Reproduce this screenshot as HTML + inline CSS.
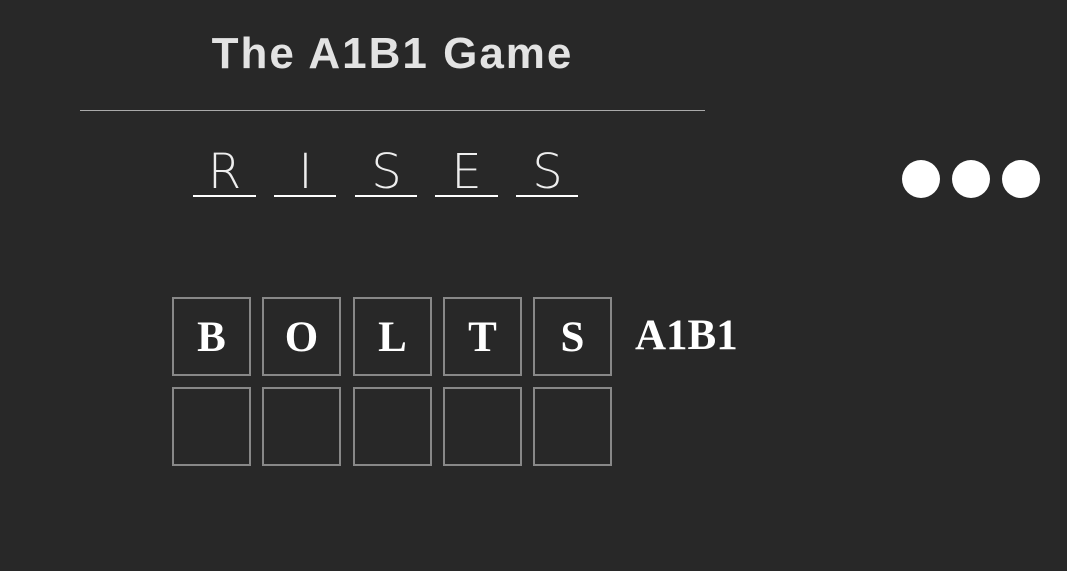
<!DOCTYPE html>
<html><head><style>
body{margin:0;width:1067px;height:571px;background:#282828;overflow:hidden;position:relative;font-family:"Liberation Sans",sans-serif}
.t{position:absolute;left:80px;width:625px;top:29px;text-align:center;font-weight:bold;font-size:44px;color:#e3e3e3;letter-spacing:2px}
.hr{position:absolute;left:80px;width:625px;top:110px;height:1px;background:#aaa}
.u{position:absolute;top:195px;height:2px;background:#fff;width:63px}
.l{position:absolute;top:144px;width:63px;text-align:center;font-family:"DejaVu Sans",sans-serif;font-weight:200;font-size:48px;color:#eee}
.d{position:absolute;top:160px;width:38px;height:38px;border-radius:50%;background:#fff}
.b{position:absolute;width:75px;height:75px;border:2px solid #888;box-sizing:content-box;color:#fff;font-family:"Liberation Serif",serif;font-weight:bold;font-size:43px;text-align:center;line-height:77px}
.r{position:absolute;left:635px;top:311px;color:#fff;font-family:"Liberation Serif",serif;font-weight:bold;font-size:43px}
</style></head><body>
<div class="t">The A1B1 Game</div>
<div class="hr"></div>
<div class="l" style="left:193px">R</div><div class="u" style="left:193px"></div>
<div class="l" style="left:274px">I</div><div class="u" style="left:274px;width:62px"></div>
<div class="l" style="left:355px">S</div><div class="u" style="left:355px;width:62px"></div>
<div class="l" style="left:435px">E</div><div class="u" style="left:435px"></div>
<div class="l" style="left:516px">S</div><div class="u" style="left:516px;width:62px"></div>
<div class="d" style="left:902px"></div><div class="d" style="left:952px"></div><div class="d" style="left:1002px"></div>
<div class="b" style="left:172px;top:297px">B</div>
<div class="b" style="left:262px;top:297px">O</div>
<div class="b" style="left:353px;top:297px">L</div>
<div class="b" style="left:443px;top:297px">T</div>
<div class="b" style="left:533px;top:297px">S</div>
<div class="r">A1B1</div>
<div class="b" style="left:172px;top:387px"></div>
<div class="b" style="left:262px;top:387px"></div>
<div class="b" style="left:353px;top:387px"></div>
<div class="b" style="left:443px;top:387px"></div>
<div class="b" style="left:533px;top:387px"></div>
</body></html>
